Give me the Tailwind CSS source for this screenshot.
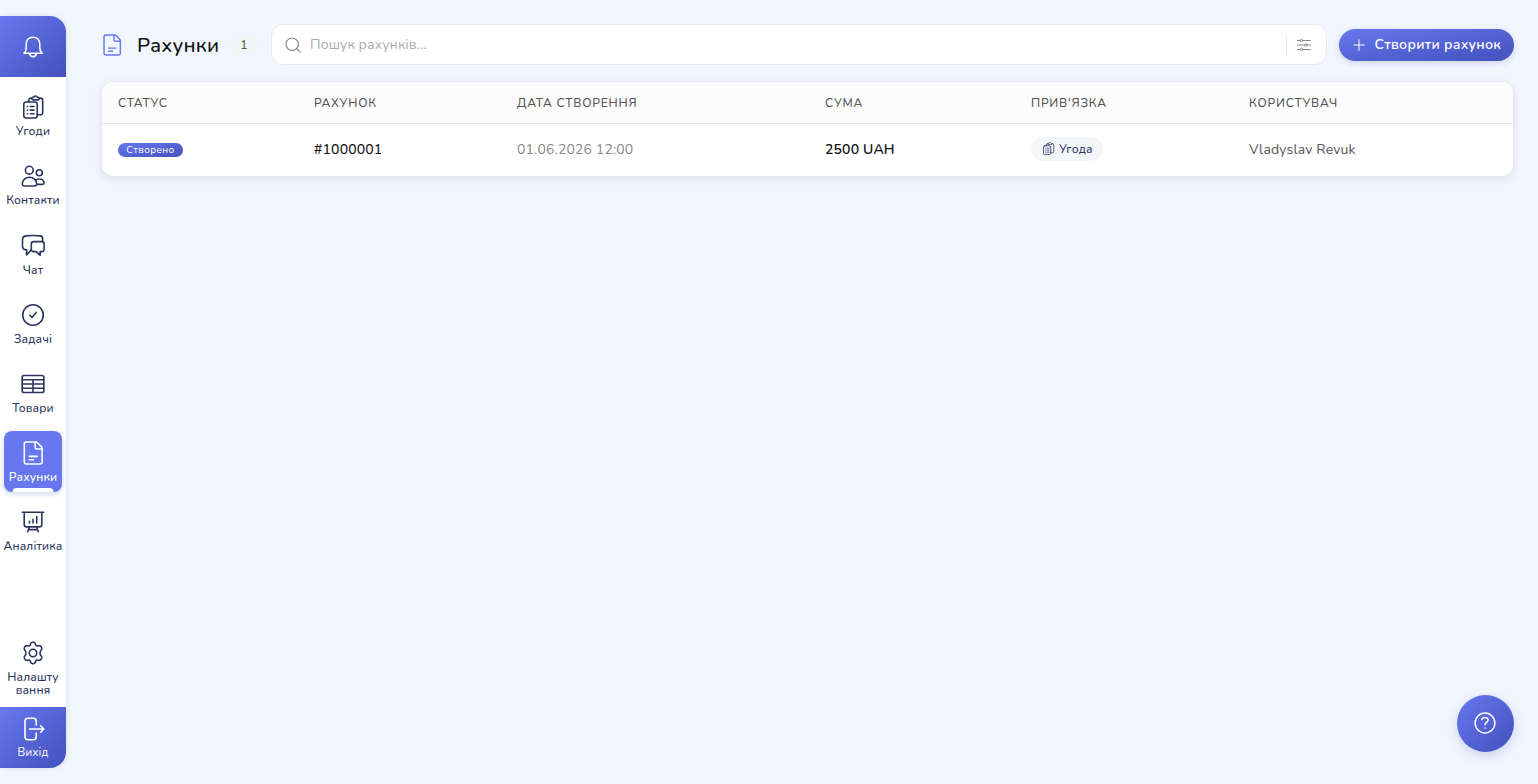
<!DOCTYPE html>
<html lang="uk">

<head>
    <meta charset="UTF-8">
    <meta name="viewport" content="width=device-width, initial-scale=1.0">
    <title>Рахунки</title>
    <script src="https://cdn.jsdelivr.net/npm/@tailwindcss/browser@4"></script>
    <style>
        body {
            font-family: 'Nunito', 'Open Sans', 'Noto Sans', sans-serif;
        }
    </style>
</head>

<body class="bg-[#f1f6ff] h-screen flex overflow-hidden text-[#111] text-sm tracking-[0.15px]">
    <!-- shared icons -->
    <svg class="hidden">
        <symbol id="deals" viewBox="0 0 24 24">
            <rect x="2.8" y="7" width="13.4" height="16" rx="2.2" />
            <path d="M7.8 7V5.4c0-1.4.9-2.3 2.3-2.3h.6M18.3 3.1h1.1c1.4 0 2.3.9 2.3 2.3v12.1c0 1.4-.9 2.3-2.3 2.3h-3.2" />
            <path d="M10.8 3.6c0-.8.6-1.3 1.3-1.3h.5c.3-.8 1-1.3 1.9-1.3s1.6.5 1.9 1.3h.5c.8 0 1.300.5 1.300 1.300s-.5 1.300-1.300 1.300h-4.800c-.7 0-1.300-.5-1.300-1.300z" />
            <path d="M6.3 11.5h.3M9.300 11.5h3.700M6.300 15.100h.3M9.300 15.100h3.700M6.300 18.700h.3M9.300 18.700h3.700" />
        </symbol>
        <symbol id="doc" viewBox="0 0 24 24">
            <path d="M5.200 1h9.600c.7 0 1.300.3 1.700.7l3.900 4.100c.4.500.7 1.100.7 1.700v13.600c0 1.100-.8 1.900-1.900 1.900H5.200c-1.100 0-1.900-.8-1.900-1.900V2.900C3.300 1.800 4.100 1 5.200 1z" />
            <path d="M14.200 1.200v5c0 1.100.7 1.800 1.800 1.800h4.800M8.200 15.400h8M8.200 18.700h4.300" />
        </symbol>
    </svg>

    <aside class="mt-4 h-[752px] w-[66px] shrink-0 bg-white rounded-r-2xl overflow-hidden flex flex-col text-[12px] leading-[13px] font-medium tracking-[0.15px] text-[#2a3660] shadow-[0_0_6px_rgba(0,0,0,0.1)]">
        <a href="#" class="h-[61px] shrink-0 flex items-center justify-center bg-gradient-to-br from-[#6777ef] to-[#4451bd] text-white">
            <svg class="size-6" viewBox="0 0 24 24" fill="none" stroke="currentColor" stroke-width="1.5" stroke-linecap="round" stroke-linejoin="round">
                <path d="M2.900 18.200c1.900-1.400 2.300-3.300 2.300-5.600V9.200c0-4.200 2.700-7 6.800-7s6.800 2.800 6.800 7v3.400c0 2.300.5 4.200 2.400 5.600zM8.500 18.400c.4 2.300 1.700 3.300 3.500 3.300s3.100-1 3.500-3.300" />
            </svg>
        </a>

        <nav class="flex flex-col gap-2 px-1 pt-2 whitespace-nowrap">
            <a href="#" class="h-[61.2px] flex flex-col items-center pt-[10px] gap-[6px]">
                <svg class="size-6 shrink-0" fill="none" stroke="currentColor" stroke-width="1.6" stroke-linecap="round" stroke-linejoin="round"><use href="#deals" /></svg>
                <span>Угоди</span>
            </a>
            <a href="#" class="h-[61.2px] flex flex-col items-center pt-[10px] gap-[6px]">
                <svg class="size-6 shrink-0" viewBox="0 0 24 24" fill="none" stroke="currentColor" stroke-width="1.6" stroke-linecap="round" stroke-linejoin="round">
                    <circle cx="8.3" cy="6.2" r="3.9" />
                    <circle cx="18.3" cy="8.7" r="3" />
                    <path d="M8.500 13.200c-4 0-7 2.800-7.200 6.600-.1 1.400.8 2.200 2.200 2.200h10c1.400 0 2.300-.8 2.200-2.200-.2-3.800-3.200-6.600-7.200-6.600zM14.300 16.400c1.100-1 2.500-1.500 4-1.400 2.500.1 4.500 1.600 4.700 3.700.1 1-.5 1.700-1.600 1.700h-5.600" />
                </svg>
                <span>Контакти</span>
            </a>
            <a href="#" class="h-[61.2px] flex flex-col items-center pt-[10px] gap-[7px]">
                <svg class="size-6 shrink-0" viewBox="0 0 24 24" fill="none" stroke="currentColor" stroke-width="1.6" stroke-linecap="round" stroke-linejoin="round">
                    <path d="M21.600 8.400V5.600c0-1.500-.9-2.500-2.400-2.700-4.800-.5-9.600-.5-14.400 0-2 .3-3.300 1.500-3.300 3.500v6.800c0 2 1.100 3.300 3.100 3.500h1v5.200l4.400-4.700" />
                    <path d="M12.600 8.600h8.200c1.400 0 2.300.9 2.300 2.300v5.400c0 1.400-.9 2.300-2.300 2.300h-1.600v3.700l-3.900-3.700h-2.700c-1.400 0-2.300-.9-2.300-2.300v-5.400c0-1.400.9-2.300 2.300-2.300z" />
                </svg>
                <span>Чат</span>
            </a>
            <a href="#" class="h-[61.2px] flex flex-col items-center pt-[10px] gap-[6px]">
                <svg class="size-6 shrink-0" viewBox="0 0 24 24" fill="none" stroke="currentColor" stroke-width="1.6" stroke-linecap="round" stroke-linejoin="round">
                    <circle cx="12" cy="12" r="10.3" />
                    <path d="M8.800 12.300l2.200 2.200 4.200-5.100" />
                </svg>
                <span>Задачі</span>
            </a>
            <a href="#" class="h-[61.2px] flex flex-col items-center pt-[10px] gap-[6px]">
                <svg class="size-6 shrink-0" viewBox="0 0 24 24" fill="none" stroke="currentColor" stroke-width="1.6" stroke-linecap="round" stroke-linejoin="round">
                    <rect x="1.2" y="3.5" width="21.6" height="17" rx="1.8" />
                    <path d="M1.200 7.700h21.600M1.200 12h21.600M1.200 16.300h21.600M12 7.700v12.800" />
                </svg>
                <span>Товари</span>
            </a>
            <a href="#" class="relative h-[61.2px] flex flex-col items-center pt-[10px] gap-[6px] bg-[#6777ef] text-white rounded-lg shadow-[0_2px_6px_#d0d4e8]">
                <svg class="size-6 shrink-0" fill="none" stroke="currentColor" stroke-width="1.6" stroke-linecap="round" stroke-linejoin="round"><use href="#doc" /></svg>
                <span>Рахунки</span>
                <span class="absolute bottom-0 left-1/2 -translate-x-1/2 w-[41px] h-1 bg-white rounded-t"></span>
            </a>
            <a href="#" class="h-[61.2px] flex flex-col items-center pt-[10px] gap-[6px]">
                <svg class="size-6 shrink-0" viewBox="0 0 24 24" fill="none" stroke="currentColor" stroke-width="1.6" stroke-linecap="round" stroke-linejoin="round">
                    <path d="M1.300 2.300h21.400M3.200 2.300v12.200c0 1.500.9 2.400 2.400 2.400h12.800c1.500 0 2.400-.9 2.400-2.400V2.300M8.300 17l-1.600 4.800M15.700 17l1.600 4.800M7.600 19.600h8.800M8.500 11.200v1.700M12 9.200v3.700M15.700 6.500v6.400" />
                </svg>
                <span>Аналітика</span>
            </a>
        </nav>

        <a href="#" class="mt-auto mb-[10px] flex flex-col items-center gap-[6px] text-center">
            <svg class="size-6" viewBox="0 0 24 24" fill="none" stroke="currentColor" stroke-width="1.6" stroke-linecap="round" stroke-linejoin="round">
                <path d="M9.600 3.100c.2-1.200.9-1.800 2-1.800h.8c1.100 0 1.800.6 2 1.800.3 1.500 1.500 2.200 2.900 1.700 1.200-.4 2.100-.2 2.700.8l.6 1c.5 1 .3 1.900-.6 2.700-1.300 1.200-1.300 4.200 0 5.400.9.8 1.100 1.700.6 2.700l-.6 1c-.6 1-1.500 1.200-2.700.8-1.400-.5-2.600.2-2.900 1.700-.2 1.200-.9 1.800-2 1.800h-.8c-1.100 0-1.800-.6-2-1.800-.3-1.500-1.500-2.200-2.900-1.700-1.200.4-2.100.2-2.700-.8l-.6-1c-.5-1-.3-1.900.6-2.700 1.300-1.200 1.300-4.200 0-5.400-.9-.8-1.100-1.700-.6-2.700l.6-1c.6-1 1.500-1.200 2.700-.8 1.400.5 2.600-.2 2.900-1.700z" />
                <circle cx="12" cy="12" r="3.7" />
            </svg>
            <span>Налашту<br>вання</span>
        </a>
        <a href="#" class="h-[61px] shrink-0 flex flex-col items-center pt-[10px] gap-[5px] bg-gradient-to-br from-[#6777ef] to-[#4451bd] text-white font-normal">
            <svg class="size-6 shrink-0" viewBox="0 0 24 24" fill="none" stroke="currentColor" stroke-width="1.6" stroke-linecap="round" stroke-linejoin="round">
                <path d="M15.200 8V4.300c0-2-1-3-3-3H7c-2 0-3 1-3 3v15.400c0 2 1 3 3 3h5.200c2 0 3-1 3-3V16M8.500 12h14.300M19.600 8.800L22.800 12l-3.200 3.200" />
            </svg>
            <span class="text-[11.5px]">Вихід</span>
        </a>
    </aside>

    <main class="flex-1 pl-[35px] pr-[24.5px] pt-6">
        <header class="flex items-center h-[41px]">
            <svg class="size-[22px] mr-0.5 text-[#6777ef] shrink-0" fill="none" stroke="currentColor" stroke-width="1.6" stroke-linecap="round" stroke-linejoin="round"><use href="#doc" /></svg>
            <h1 class="ml-3 pt-0.5 w-[81px] text-[20.5px] font-medium tracking-[0.2px] whitespace-nowrap">Рахунки</h1>
            <span class="ml-3 mr-px w-7 h-[18px] flex items-center justify-center rounded-full bg-[#f4f5f7] text-xs font-medium text-[#555]">1</span>
            <div class="ml-3 flex-1 h-[41px] flex items-center bg-white border border-[#e6e9ee] rounded-xl pl-3">
                <svg class="size-[18px] text-[#888]" viewBox="0 0 18 18" fill="none" stroke="currentColor" stroke-width="1.2" stroke-linecap="round">
                    <circle cx="8.2" cy="8.2" r="6.2" />
                    <path d="M12.800 12.800l3.400 3.400" />
                </svg>
                <input type="text" placeholder="Пошук рахунків..." class="ml-2 flex-1 text-sm tracking-[0.1px] placeholder:text-[#aaa] outline-none">
                <button class="h-5 border-l border-[#e5e7eb] pl-[9px] pr-[14px] text-[#888]">
                    <svg class="size-4" viewBox="0 0 16 16" fill="none" stroke="currentColor" stroke-width="1" stroke-linecap="round">
                        <path d="M1.500 3.500h2.700M6.800 3.500h7.700M1.500 8h7M11.100 8h3.400M1.500 12.500h2.700M6.800 12.500h7.700" />
                        <circle cx="5.5" cy="3.5" r="1.2" />
                        <circle cx="9.8" cy="8" r="1.2" />
                        <circle cx="5.5" cy="12.5" r="1.2" />
                    </svg>
                </button>
            </div>
            <button class="ml-3 w-[175px] h-8 pl-[14px] flex items-center gap-[10px] rounded-full bg-gradient-to-br from-[#6777ef] to-[#4451bd] text-white text-sm font-semibold tracking-[0.3px] whitespace-nowrap shadow-[0_2px_6px_#cdd4ee]">
                <svg class="size-3 shrink-0" viewBox="0 0 12 12" fill="none" stroke="currentColor" stroke-width="1" stroke-linecap="round">
                    <path d="M6 .7v10.600M.7 6h10.600" />
                </svg>
                <span>Створити рахунок</span>
            </button>
        </header>

        <div class="mt-4 bg-white border border-[#e6e8eb] rounded-xl overflow-hidden shadow-[0_2px_8px_rgba(0,0,0,0.09)]">
            <table class="w-full table-fixed text-left">
                <thead class="bg-[#fcfcfc] text-xs text-[#555] tracking-[0.8px]">
                    <tr class="h-[41.5px] border-b border-[#e3e6ea]">
                        <th class="w-[196px] pl-4 font-medium">СТАТУС</th>
                        <th class="w-[203px] pl-4 font-medium">РАХУНОК</th>
                        <th class="w-[308px] pl-4 font-medium">ДАТА СТВОРЕННЯ</th>
                        <th class="w-[206px] pl-4 font-medium">СУМА</th>
                        <th class="w-[218px] pl-4 font-medium">ПРИВ'ЯЗКА</th>
                        <th class="pl-4 font-medium">КОРИСТУВАЧ</th>
                    </tr>
                </thead>
                <tbody>
                    <tr class="h-[52px]">
                        <td class="pl-4">
                            <span class="flex items-center justify-center w-[65px] h-[14px] rounded-full bg-gradient-to-br from-[#6777ef] to-[#4451bd] text-white text-[10px] tracking-[0.4px]">Створено</span>
                        </td>
                        <td class="pl-4 font-medium">#1000001</td>
                        <td class="pl-4 text-[#888]">01.06.2026 12:00</td>
                        <td class="pl-4 font-semibold">2500 UAH</td>
                        <td class="pl-4">
                            <span class="flex items-center gap-1 w-[72px] h-6 mb-[2px] pl-[11px] rounded-full bg-[#f5f6f8] text-xs font-medium text-[#2b3674]">
                                <svg class="size-[13px] shrink-0" fill="none" stroke="currentColor" stroke-width="1.5" stroke-linecap="round" stroke-linejoin="round"><use href="#deals" /></svg>
                                Угода
                            </span>
                        </td>
                        <td class="pl-4 text-[#555]">Vladyslav Revuk</td>
                    </tr>
                </tbody>
            </table>
        </div>
    </main>

    <button class="fixed right-[24.5px] bottom-[32.5px] size-[57px] rounded-full flex items-center justify-center bg-gradient-to-br from-[#6777ef] to-[#4451bd] text-white shadow-[0_4px_12px_#cbd2e6]">
        <svg class="size-[22px]" viewBox="0 0 24 24" fill="none" stroke="currentColor" stroke-width="1.6" stroke-linecap="round" stroke-linejoin="round">
            <circle cx="12" cy="12" r="10.8" />
            <path d="M8.600 8.400c.3-1.500 1.600-2.500 3.400-2.500 2 0 3.400 1.200 3.400 2.900 0 2.400-3.400 2.600-3.400 5M12 17.500v.1" />
        </svg>
    </button>
</body>

</html>
